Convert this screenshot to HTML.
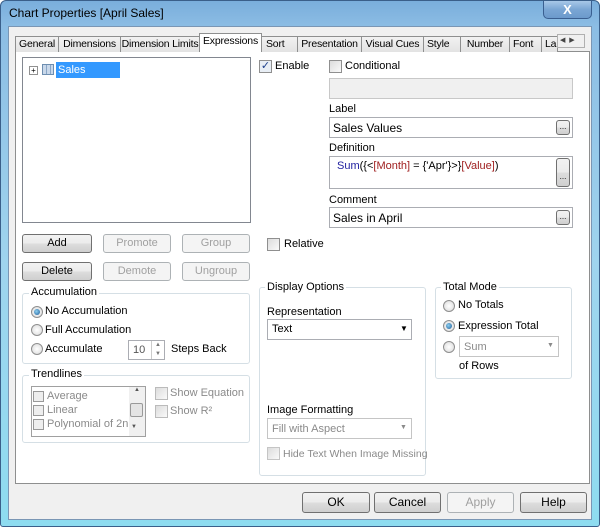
<!DOCTYPE html>
<html><head><meta charset="utf-8"><style>
*{box-sizing:border-box;margin:0;padding:0}
body{width:600px;height:527px;overflow:hidden;font-family:"Liberation Sans",sans-serif;font-size:11px;color:#000;background:#fff;position:relative}
.a{position:absolute}
.frame{left:0;top:0;width:600px;height:527px;background:linear-gradient(180deg,#7aaedc 0%,#8cbde4 5%,#9fd4ee 50%,#8edcf0 100%);border:1px solid #3a5f8a;border-radius:6px 6px 3px 3px}
.client{left:8px;top:26px;width:584px;height:494px;background:#f0f0f0;border:1px solid #7a96b4}
.title{left:9px;top:6px;font-size:12px;color:#000}
.close{left:543px;top:1px;width:49px;height:18px;border:1px solid #3a5f90;border-top:none;border-radius:0 0 5px 5px;background:linear-gradient(#a8c8e8,#7aa6d4 50%,#6c9acc);color:#fff;font-weight:bold;text-align:center;font-size:13px;line-height:17px}
.panel{left:15px;top:51px;width:575px;height:433px;background:#fff;border:1px solid #8e8f8f}
.tab{top:36px;height:16px;border:1px solid #8e8f8f;border-bottom:none;background:linear-gradient(#f2f2f2,#e3e3e3);text-align:center;line-height:15px;font-size:10.5px;letter-spacing:-0.2px;white-space:nowrap;overflow:hidden}
.tab.sel{top:33px;height:19px;background:#fff;z-index:2}
.box{border:1px solid #abadb3;background:#fff}
.btn{height:19px;border:1px solid #707070;border-radius:3px;background:linear-gradient(#f2f2f2,#ebebeb 50%,#dddddd 51%,#cfcfcf);text-align:center;line-height:17px;font-size:11px}
.btn.dis{border-color:#adb2b5;background:#f4f4f4;color:#a0a0a0}
.grp{border:1px solid #d5dfe5;border-radius:3px}
.gl{background:#fff;padding:0 2px;font-size:11px}
.cb{width:13px;height:13px;border:1px solid #8f8f8f;background:linear-gradient(135deg,#dcdcdc,#fafafa)}
.rb{width:12px;height:12px;border:1px solid #8f8f8f;border-radius:50%;background:radial-gradient(#fff,#d8d8d8)}
.rb.on::after{content:"";position:absolute;left:2px;top:2px;width:6px;height:6px;border-radius:50%;background:radial-gradient(circle at 40% 40%,#8fd0f0,#1a5a98)}
.g{color:#8a8a8a}
.tl{display:flex;align-items:center;gap:3px;white-space:nowrap}
.tl span{flex:none;display:inline-block;width:11px;height:11px;border:1px solid #999;background:#eee}
</style></head><body>
<div class="a frame"></div>
<div class="a title">Chart Properties [April Sales]</div>
<div class="a close">X</div>
<div class="a client"></div>
<div class="a panel"></div>
<div class="a tab" style="left:15px;width:44px">General</div>
<div class="a tab" style="left:58px;width:63px">Dimensions</div>
<div class="a tab" style="left:120px;width:80px">Dimension Limits</div>
<div class="a tab sel" style="left:199px;width:63px">Expressions</div>
<div class="a tab" style="left:261px;width:37px;text-align:left;padding-left:4px">Sort</div>
<div class="a tab" style="left:297px;width:65px">Presentation</div>
<div class="a tab" style="left:361px;width:63px">Visual Cues</div>
<div class="a tab" style="left:423px;width:38px;text-align:left;padding-left:3px">Style</div>
<div class="a tab" style="left:460px;width:50px">Number</div>
<div class="a tab" style="left:509px;width:33px;text-align:left;padding-left:3px">Font</div>
<div class="a tab" style="left:541px;width:17px;text-align:left;padding-left:3px">La</div>
<div class="a" style="left:557px;top:34px;width:28px;height:14px;border:1px solid #b0b0b0;background:#f0f0f0;font-size:7px;line-height:12px;color:#444">&nbsp;◀&nbsp;&nbsp;▶</div>

<div class="a box" style="left:22px;top:57px;width:229px;height:166px;border-color:#828790"></div>
<div class="a" style="left:29px;top:66px;width:9px;height:9px;border:1px solid #919191;font-size:8px;line-height:7px;text-align:center;background:#fff">+</div>
<div class="a" style="left:42px;top:64px;width:12px;height:11px;border:1px solid #6e8eb0;background:repeating-linear-gradient(90deg,#c9d8ea 0 3px,#8aa6c6 3px 4px)"></div>
<div class="a" style="left:56px;top:62px;width:64px;height:16px;background:#3399ff;color:#fff;line-height:16px;padding-left:2px">Sales Values</div>

<div class="a btn" style="left:22px;top:234px;width:70px">Add</div>
<div class="a btn dis" style="left:103px;top:234px;width:68px">Promote</div>
<div class="a btn dis" style="left:182px;top:234px;width:68px">Group</div>
<div class="a btn" style="left:22px;top:262px;width:70px">Delete</div>
<div class="a btn dis" style="left:103px;top:262px;width:68px">Demote</div>
<div class="a btn dis" style="left:182px;top:262px;width:68px">Ungroup</div>

<div class="a grp" style="left:22px;top:293px;width:228px;height:71px"></div>
<div class="a gl" style="left:29px;top:286px">Accumulation</div>
<div class="a rb on" style="left:31px;top:306px"></div><div class="a" style="left:45px;top:305px">No Accumulation</div>
<div class="a rb" style="left:31px;top:324px"></div><div class="a" style="left:45px;top:324px">Full Accumulation</div>
<div class="a rb" style="left:31px;top:343px"></div><div class="a" style="left:45px;top:343px">Accumulate</div>
<div class="a box" style="left:128px;top:340px;width:37px;height:20px;color:#555;padding:3px 0 0 4px">10</div>
<div class="a" style="left:151px;top:341px;width:13px;height:18px;border-left:1px solid #ccc;font-size:6px;color:#777;text-align:center;line-height:9px">▲<br>▼</div>
<div class="a" style="left:171px;top:343px">Steps Back</div>

<div class="a grp" style="left:22px;top:375px;width:228px;height:68px"></div>
<div class="a gl" style="left:29px;top:368px">Trendlines</div>
<div class="a box" style="left:31px;top:386px;width:115px;height:51px;border-color:#a0a0a0;overflow:hidden"></div>
<div class="a g" style="left:33px;top:389px;line-height:14px;width:95px;overflow:hidden">
<div class="tl"><span></span>Average</div>
<div class="tl"><span></span>Linear</div>
<div class="tl"><span></span>Polynomial of 2nd d</div>
</div>
<div class="a" style="left:129px;top:387px;width:16px;height:49px;background:#f0f0f0;font-size:6px;color:#555;text-align:center">▲</div>
<div class="a" style="left:130px;top:403px;width:13px;height:14px;border:1px solid #999;border-radius:2px;background:#e4e4e4"></div>
<div class="a" style="left:131px;top:424px;font-size:6px;color:#555">▼</div>
<div class="a cb" style="left:155px;top:387px;border-color:#bbb"></div><div class="a g" style="left:170px;top:387px">Show Equation</div>
<div class="a cb" style="left:155px;top:405px;border-color:#bbb"></div><div class="a g" style="left:170px;top:405px">Show R²</div>

<div class="a cb" style="left:259px;top:60px;background:#e8eef5;font-size:11px;line-height:11px;color:#1c3f8c;text-align:center">✓</div><div class="a" style="left:275px;top:60px">Enable</div>
<div class="a cb" style="left:329px;top:60px"></div><div class="a" style="left:345px;top:60px">Conditional</div>
<div class="a" style="left:329px;top:78px;width:244px;height:21px;border:1px solid #c8c8c8;background:#f0f0f0"></div>
<div class="a" style="left:329px;top:103px">Label</div>
<div class="a box" style="left:329px;top:117px;width:244px;height:21px;font-size:12px;padding:3px 0 0 3px">Sales Values</div>
<div class="a btn" style="left:556px;top:120px;width:14px;height:15px;font-size:8px;line-height:12px">...</div>
<div class="a" style="left:329px;top:142px">Definition</div>
<div class="a box" style="left:329px;top:156px;width:244px;height:33px;font-size:11px;padding:3px 0 0 7px"><span style="color:#2020a0">Sum</span>({&lt;<span style="color:#a02020">[Month]</span> = {'Apr'}&gt;}<span style="color:#a02020">[Value]</span>)</div>
<div class="a btn" style="left:556px;top:158px;width:14px;height:29px;font-size:8px;line-height:36px">...</div>
<div class="a" style="left:329px;top:194px">Comment</div>
<div class="a box" style="left:329px;top:207px;width:244px;height:21px;font-size:12px;padding:3px 0 0 3px">Sales in April</div>
<div class="a btn" style="left:556px;top:210px;width:14px;height:15px;font-size:8px;line-height:12px">...</div>
<div class="a cb" style="left:267px;top:238px"></div><div class="a" style="left:284px;top:238px">Relative</div>

<div class="a grp" style="left:259px;top:287px;width:167px;height:189px"></div>
<div class="a gl" style="left:265px;top:281px">Display Options</div>
<div class="a" style="left:267px;top:306px">Representation</div>
<div class="a box" style="left:267px;top:319px;width:145px;height:21px;padding:3px 0 0 4px">Text</div>
<div class="a" style="left:400px;top:324px;font-size:8px">▼</div>
<div class="a" style="left:267px;top:404px">Image Formatting</div>
<div class="a box g" style="left:267px;top:418px;width:145px;height:21px;padding:4px 0 0 4px;border-color:#c5c5c5">Fill with Aspect</div>
<div class="a g" style="left:400px;top:424px;font-size:7px">▼</div>
<div class="a cb" style="left:267px;top:447px;border-color:#c5c5c5"></div><div class="a g" style="left:283px;top:448px;font-size:10.5px">Hide Text When Image Missing</div>

<div class="a grp" style="left:435px;top:287px;width:137px;height:92px"></div>
<div class="a gl" style="left:441px;top:281px">Total Mode</div>
<div class="a rb" style="left:443px;top:300px"></div><div class="a" style="left:458px;top:299px">No Totals</div>
<div class="a rb on" style="left:443px;top:320px"></div><div class="a" style="left:458px;top:320px">Expression Total</div>
<div class="a rb" style="left:443px;top:341px"></div>
<div class="a box g" style="left:459px;top:336px;width:100px;height:21px;padding:4px 0 0 4px;border-color:#c5c5c5">Sum</div>
<div class="a g" style="left:547px;top:342px;font-size:7px">▼</div>
<div class="a" style="left:459px;top:360px">of Rows</div>

<div class="a btn" style="left:302px;top:492px;width:68px;height:21px;line-height:19px;font-size:12px">OK</div>
<div class="a btn" style="left:374px;top:492px;width:67px;height:21px;line-height:19px;font-size:12px">Cancel</div>
<div class="a btn dis" style="left:447px;top:492px;width:67px;height:21px;line-height:19px;font-size:12px">Apply</div>
<div class="a btn" style="left:520px;top:492px;width:67px;height:21px;line-height:19px;font-size:12px">Help</div>
</body></html>
